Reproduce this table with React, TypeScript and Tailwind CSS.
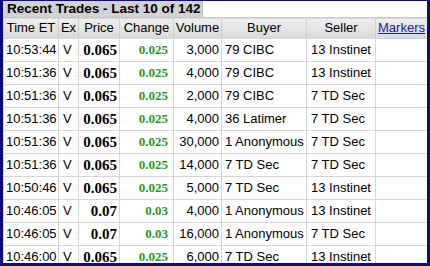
import React from 'react';

interface Trade {
  time: string;
  ex: string;
  price: string;
  change: string;
  volume: string;
  buyer: string;
  seller: string;
}

const trades: Trade[] = [
  { time: '10:53:44', ex: 'V', price: '0.065', change: '0.025', volume: '3,000', buyer: '79 CIBC', seller: '13 Instinet' },
  { time: '10:51:36', ex: 'V', price: '0.065', change: '0.025', volume: '4,000', buyer: '79 CIBC', seller: '13 Instinet' },
  { time: '10:51:36', ex: 'V', price: '0.065', change: '0.025', volume: '2,000', buyer: '79 CIBC', seller: '7 TD Sec' },
  { time: '10:51:36', ex: 'V', price: '0.065', change: '0.025', volume: '4,000', buyer: '36 Latimer', seller: '7 TD Sec' },
  { time: '10:51:36', ex: 'V', price: '0.065', change: '0.025', volume: '30,000', buyer: '1 Anonymous', seller: '7 TD Sec' },
  { time: '10:51:36', ex: 'V', price: '0.065', change: '0.025', volume: '14,000', buyer: '7 TD Sec', seller: '7 TD Sec' },
  { time: '10:50:46', ex: 'V', price: '0.065', change: '0.025', volume: '5,000', buyer: '7 TD Sec', seller: '13 Instinet' },
  { time: '10:46:05', ex: 'V', price: '0.07', change: '0.03', volume: '4,000', buyer: '1 Anonymous', seller: '13 Instinet' },
  { time: '10:46:05', ex: 'V', price: '0.07', change: '0.03', volume: '16,000', buyer: '1 Anonymous', seller: '7 TD Sec' },
  { time: '10:46:00', ex: 'V', price: '0.065', change: '0.025', volume: '6,000', buyer: '7 TD Sec', seller: '13 Instinet' },
];

const cell = 'border border-[#d6d6d6] h-[23px] p-0 leading-[20px] whitespace-nowrap';
const head = 'border-x border-[#d0d0d0] font-normal text-center px-0 h-[20px] whitespace-nowrap';

const App: React.FC = () => {
  return (
    <div className="w-[430px] h-[266px] bg-[#0c0c7c] pt-px px-[3px] pb-[3px] font-['Liberation_Sans',Arial,sans-serif] text-[13px] text-black">
      <div className="w-full h-full bg-white overflow-hidden">
        <div className="flex h-[16px]">
          <div className="w-[200px] bg-[#d2d2d2] border-r border-[#b8b8b8] font-bold text-[13.5px] leading-[16px] pl-[4px] whitespace-nowrap overflow-hidden">
            Recent Trades - Last 10 of 142
          </div>
          <div className="flex-1 bg-white" />
        </div>
        <table className="table-fixed border-collapse w-[424px]">
          <colgroup>
            <col className="w-[55px]" />
            <col className="w-[20px]" />
            <col className="w-[41px]" />
            <col className="w-[54px]" />
            <col className="w-[48px]" />
            <col className="w-[85px]" />
            <col className="w-[69px]" />
            <col className="w-[52px]" />
          </colgroup>
          <thead>
            <tr className="bg-gradient-to-b from-[#efefef] to-[#d9d9d9] border-t border-[#c8c8c8]">
              <th className={head}>Time ET</th>
              <th className={head}>Ex</th>
              <th className={head}>Price</th>
              <th className={head}>Change</th>
              <th className={head}>Volume</th>
              <th className={head}>Buyer</th>
              <th className={head}>Seller</th>
              <th className={head}>
                <a href="#" className="text-[#1a1aa6] underline">Markers</a>
              </th>
            </tr>
          </thead>
          <tbody>
            {trades.map((t, i) => (
              <tr key={i}>
                <td className={`${cell} pl-[2px]`}>{t.time}</td>
                <td className={`${cell} pl-[4px]`}>{t.ex}</td>
                <td className={`${cell} text-right pr-[2px] font-['Liberation_Serif','Times_New_Roman',serif] font-bold text-[15px]`}>
                  {t.price}
                </td>
                <td className={`${cell} text-right pr-[5px] font-['Liberation_Serif','Times_New_Roman',serif] font-bold text-[13px] text-[#1f9a1f]`}>
                  {t.change}
                </td>
                <td className={`${cell} text-right pr-[2px]`}>{t.volume}</td>
                <td className={`${cell} pl-[3px]`}>{t.buyer}</td>
                <td className={`${cell} pl-[4px]`}>{t.seller}</td>
                <td className={cell}></td>
              </tr>
            ))}
          </tbody>
        </table>
      </div>
    </div>
  );
};

export default App;
